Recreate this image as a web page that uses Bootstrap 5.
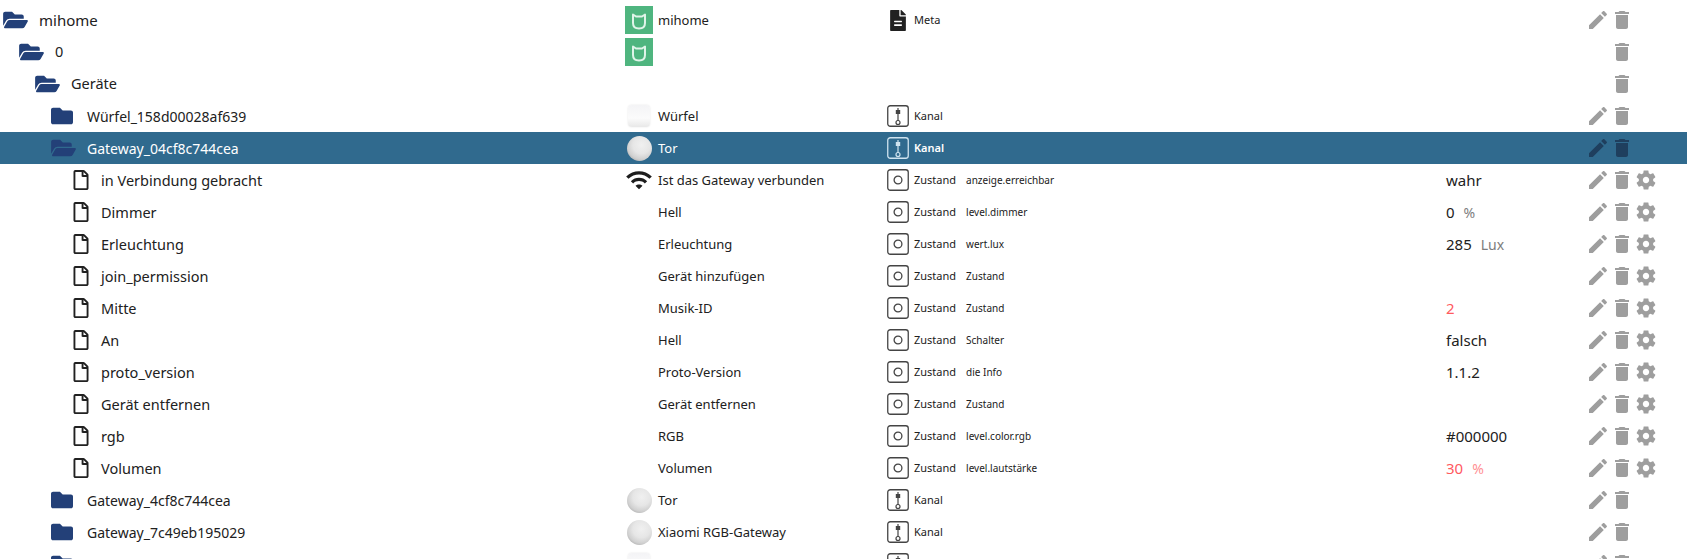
<!DOCTYPE html>
<html lang="de">
<head>
<meta charset="utf-8">
<title>mihome</title>
<link rel="stylesheet" href="https://cdn.jsdelivr.net/npm/bootstrap@5.3.0/dist/css/bootstrap.min.css">
<style>
html,body{height:559px;overflow:hidden;background:#fff}
body{font-family:"Noto Sans","Liberation Sans",sans-serif;color:#212121;font-size:14px}
.tree{padding-top:4px}
.trow{height:32px;white-space:nowrap}
.trow.sel{background:#306a8e;color:#fff}
.cname{width:625px;font-size:14.5px}
.cname.l0{font-size:15px}
.cname.l3{font-size:14px}
.cname.l4 span:last-child,.cdev span:last-child{padding-top:2px}
.cdev .devslot:last-child{padding-top:0}
.cdev{width:262px;font-size:13px}
.ctype{width:559px;font-size:11px}
.cval{width:140px;font-size:15px;padding-top:1px}
.cact{color:#9e9e9e}
.sel .cact{color:#1f3f5e}
.l0{padding-left:3px}.l1{padding-left:19px}.l2{padding-left:35px}.l3{padding-left:51px}.l4{padding-left:73px}
.ico{width:36px;flex:none}
.l4 .ico{width:28px}
.fold{width:25px;height:22px;color:#234078;fill:currentColor;display:block}
.foldc{width:22px}
.filei{width:16px;height:20px;fill:#212121;display:block}
.devslot{width:28px;height:28px;margin-right:5px;flex:none}
.mi{background:#4fb57f;display:block}
.disc{width:25px;height:25px;border-radius:50%;margin-left:2px;background:radial-gradient(circle at 58% 36%,#f0f0f0 0,#e6e6e6 40%,#d0d0d0 66%,#8a8a8a 100%)}
.cube{width:22px;height:22px;margin:3px 0 0 3px;border-radius:4px;background:linear-gradient(180deg,#f4f4f6,#fbfbfb 60%,#e8e8e8);box-shadow:0 0 2px #e2e2e2}
.wifi{display:block;width:28px;height:28px;fill:#1d1d1d}
.typ{width:22px;height:22px;margin-right:5px;flex:none;color:#444;display:block}
.sel .typ{color:#cfe3ef}
.sel .tlabel{font-weight:600}
.metai{width:16px;height:21px;margin:0 8px 0 3px;flex:none;fill:#212121;display:block}
.role{margin-left:10px;font-size:10px}
.act{width:24px;height:24px;fill:currentColor;display:block;flex:none}
.bad{color:#ff5a5f}
.unit{margin-left:9px;color:#7d7d7d;font-size:14px}
.bad .unit{color:#ff8f93}
</style>
</head>
<body>
<svg width="0" height="0" class="position-absolute">
  <symbol id="fo" viewBox="0 0 576 512"><path d="M572.694 292.093L500.27 416.248A63.997 63.997 0 0 1 444.989 448H45.025c-18.523 0-30.064-20.093-20.731-36.093l72.424-124.155A64 64 0 0 1 152 256h399.964c18.523 0 30.064 20.093 20.73 36.093zM152 224h328v-48c0-26.51-21.49-48-48-48H272l-64-64H48C21.49 64 0 85.49 0 112v278.046l69.077-118.418C86.214 242.25 117.989 224 152 224z"/></symbol>
  <symbol id="fc" viewBox="0 0 512 512"><path d="M464 128H272l-64-64H48C21.49 64 0 85.49 0 112v288c0 26.51 21.49 48 48 48h416c26.51 0 48-21.49 48-48V176c0-26.51-21.49-48-48-48z"/></symbol>
  <symbol id="fi" viewBox="0 0 384 512"><path d="M369.9 97.9L286 14C277 5 264.8-.1 252.1-.1H48C21.5 0 0 21.5 0 48v416c0 26.5 21.5 48 48 48h288c26.5 0 48-21.5 48-48V131.9c0-12.7-5.1-25-14.1-34zM332.1 128H256V51.9l76.1 76.1zM48 464V48h160v104c0 13.3 10.7 24 24 24h104v288H48z"/></symbol>
  <symbol id="me" viewBox="0 0 384 512"><path d="M224 136V0H24C10.7 0 0 10.7 0 24v464c0 13.3 10.7 24 24 24h336c13.3 0 24-10.7 24-24V160H248c-13.2 0-24-10.8-24-24zm64 240c0 6.6-5.4 12-12 12H108c-6.6 0-12-5.4-12-12v-16c0-6.6 5.4-12 12-12h168c6.6 0 12 5.4 12 12v16zm0-88c0 6.6-5.4 12-12 12H108c-6.6 0-12-5.4-12-12v-16c0-6.6 5.4-12 12-12h168c6.6 0 12 5.4 12 12v16zm96-166.1v6.1H256V0h6.1c6.4 0 12.5 2.5 17 7l97.9 98c4.5 4.5 7 10.6 7 16.9z"/></symbol>
  <symbol id="pe" viewBox="0 0 24 24"><path d="M3 17.25V21h3.75L17.81 9.94l-3.75-3.75L3 17.25zM20.71 7.04c.39-.39.39-1.02 0-1.41l-2.34-2.34c-.39-.39-1.02-.39-1.41 0l-1.83 1.83 3.75 3.75 1.83-1.83z"/></symbol>
  <symbol id="tr" viewBox="0 0 24 24"><path d="M6 19c0 1.1.9 2 2 2h8c1.1 0 2-.9 2-2V7H6v12zM19 4h-3.5l-1-1h-5l-1 1H5v2h14V4z"/></symbol>
  <symbol id="ge" viewBox="0 0 24 24"><path d="M19.14 12.94c.04-.3.06-.61.06-.94 0-.32-.02-.64-.07-.94l2.03-1.58c.18-.14.23-.41.12-.61l-1.92-3.32c-.12-.22-.37-.29-.59-.22l-2.39.96c-.5-.38-1.03-.7-1.62-.94l-.36-2.54c-.04-.24-.24-.41-.48-.41h-3.84c-.24 0-.43.17-.47.41l-.36 2.54c-.59.24-1.13.57-1.62.94l-2.39-.96c-.22-.08-.47 0-.59.22L2.74 8.87c-.12.21-.08.47.12.61l2.03 1.58c-.05.3-.09.63-.09.94s.02.64.07.94l-2.03 1.58c-.18.14-.23.41-.12.61l1.92 3.32c.12.22.37.29.59.22l2.39-.96c.5.38 1.03.7 1.62.94l.36 2.54c.05.24.24.41.48.41h3.84c.24 0 .44-.17.47-.41l.36-2.54c.59-.24 1.13-.56 1.62-.94l2.39.96c.22.08.47 0 .59-.22l1.92-3.32c.12-.22.07-.47-.12-.61l-2.01-1.58zM12 15.2c-1.77 0-3.2-1.43-3.2-3.2s1.43-3.2 3.2-3.2 3.2 1.43 3.2 3.2-1.43 3.2-3.2 3.2z" fill-rule="evenodd"/></symbol>
  <symbol id="wi" viewBox="0 0 24 24"><path d="M1 9l2 2c4.97-4.97 13.03-4.97 18 0l2-2C16.93 2.93 7.08 2.93 1 9zm8 8l3 3 3-3c-1.65-1.66-4.34-1.66-6 0zm-4-4l2 2c2.76-2.76 7.24-2.76 10 0l2-2C15.14 9.14 8.87 9.14 5 13z"/></symbol>
  <symbol id="ml" viewBox="0 0 28 28"><path d="M8 8.500l3 2h6l3-2v8.500c0 3.800-2.600 5.500-6 5.500s-6-1.700-6-5.500z" fill="none" stroke="#e0f4e9" stroke-width="2" stroke-linejoin="round"/></symbol>
  <symbol id="st" viewBox="0 0 22 22"><rect x=".75" y=".75" width="20.500" height="20.500" rx="2.500" fill="none" stroke="currentColor" stroke-width="1.300"/><circle cx="11" cy="11" r="3.900" fill="none" stroke="currentColor" stroke-width="1.300"/></symbol>
  <symbol id="ch" viewBox="0 0 22 22"><rect x=".75" y=".75" width="20.500" height="20.500" rx="2.500" fill="none" stroke="currentColor" stroke-width="1.300"/><path d="M11 3v13" stroke="currentColor" stroke-width="1.200"/><rect x="8.800" y="5" width="4.400" height="4" fill="currentColor"/><circle cx="11" cy="17.500" r="2" fill="none" stroke="currentColor" stroke-width="1.200"/></symbol>
</svg>

<main class="tree">
  <div class="trow d-flex align-items-center">
    <div class="cname l0 d-flex align-items-center"><span class="ico"><svg class="fold"><use href="#fo"/></svg></span><span>mihome</span></div>
    <div class="cdev d-flex align-items-center"><svg class="devslot mi"><use href="#ml"/></svg><span>mihome</span></div>
    <div class="ctype d-flex align-items-center"><svg class="metai"><use href="#me"/></svg><span class="tlabel">Meta</span></div>
    <div class="cval"></div>
    <div class="cact d-flex"><svg class="act"><use href="#pe"/></svg><svg class="act"><use href="#tr"/></svg></div>
  </div>
  <div class="trow d-flex align-items-center">
    <div class="cname l1 d-flex align-items-center"><span class="ico"><svg class="fold"><use href="#fo"/></svg></span><span>0</span></div>
    <div class="cdev d-flex align-items-center"><svg class="devslot mi"><use href="#ml"/></svg></div>
    <div class="ctype"></div>
    <div class="cval"></div>
    <div class="cact d-flex"><span class="act"></span><svg class="act"><use href="#tr"/></svg></div>
  </div>
  <div class="trow d-flex align-items-center">
    <div class="cname l2 d-flex align-items-center"><span class="ico"><svg class="fold"><use href="#fo"/></svg></span><span>Geräte</span></div>
    <div class="cdev"></div>
    <div class="ctype"></div>
    <div class="cval"></div>
    <div class="cact d-flex"><span class="act"></span><svg class="act"><use href="#tr"/></svg></div>
  </div>
  <div class="trow d-flex align-items-center">
    <div class="cname l3 d-flex align-items-center"><span class="ico"><svg class="fold foldc"><use href="#fc"/></svg></span><span>Würfel_158d00028af639</span></div>
    <div class="cdev d-flex align-items-center"><span class="devslot"><span class="cube d-block"></span></span><span>Würfel</span></div>
    <div class="ctype d-flex align-items-center"><svg class="typ"><use href="#ch"/></svg><span class="tlabel">Kanal</span></div>
    <div class="cval"></div>
    <div class="cact d-flex"><svg class="act"><use href="#pe"/></svg><svg class="act"><use href="#tr"/></svg></div>
  </div>
  <div class="trow sel d-flex align-items-center">
    <div class="cname l3 d-flex align-items-center"><span class="ico"><svg class="fold"><use href="#fo"/></svg></span><span>Gateway_04cf8c744cea</span></div>
    <div class="cdev d-flex align-items-center"><span class="devslot d-flex align-items-center"><span class="disc d-block"></span></span><span>Tor</span></div>
    <div class="ctype d-flex align-items-center"><svg class="typ"><use href="#ch"/></svg><span class="tlabel">Kanal</span></div>
    <div class="cval"></div>
    <div class="cact d-flex"><svg class="act"><use href="#pe"/></svg><svg class="act"><use href="#tr"/></svg></div>
  </div>
  <div class="trow d-flex align-items-center">
    <div class="cname l4 d-flex align-items-center"><span class="ico"><svg class="filei"><use href="#fi"/></svg></span><span>in Verbindung gebracht</span></div>
    <div class="cdev d-flex align-items-center"><span class="devslot"><svg class="wifi"><use href="#wi"/></svg></span><span>Ist das Gateway verbunden</span></div>
    <div class="ctype d-flex align-items-center"><svg class="typ"><use href="#st"/></svg><span class="tlabel">Zustand</span><span class="role">anzeige.erreichbar</span></div>
    <div class="cval">wahr</div>
    <div class="cact d-flex"><svg class="act"><use href="#pe"/></svg><svg class="act"><use href="#tr"/></svg><svg class="act"><use href="#ge"/></svg></div>
  </div>
  <div class="trow d-flex align-items-center">
    <div class="cname l4 d-flex align-items-center"><span class="ico"><svg class="filei"><use href="#fi"/></svg></span><span>Dimmer</span></div>
    <div class="cdev d-flex align-items-center"><span class="devslot"></span><span>Hell</span></div>
    <div class="ctype d-flex align-items-center"><svg class="typ"><use href="#st"/></svg><span class="tlabel">Zustand</span><span class="role">level.dimmer</span></div>
    <div class="cval">0<span class="unit">%</span></div>
    <div class="cact d-flex"><svg class="act"><use href="#pe"/></svg><svg class="act"><use href="#tr"/></svg><svg class="act"><use href="#ge"/></svg></div>
  </div>
  <div class="trow d-flex align-items-center">
    <div class="cname l4 d-flex align-items-center"><span class="ico"><svg class="filei"><use href="#fi"/></svg></span><span>Erleuchtung</span></div>
    <div class="cdev d-flex align-items-center"><span class="devslot"></span><span>Erleuchtung</span></div>
    <div class="ctype d-flex align-items-center"><svg class="typ"><use href="#st"/></svg><span class="tlabel">Zustand</span><span class="role">wert.lux</span></div>
    <div class="cval">285<span class="unit">Lux</span></div>
    <div class="cact d-flex"><svg class="act"><use href="#pe"/></svg><svg class="act"><use href="#tr"/></svg><svg class="act"><use href="#ge"/></svg></div>
  </div>
  <div class="trow d-flex align-items-center">
    <div class="cname l4 d-flex align-items-center"><span class="ico"><svg class="filei"><use href="#fi"/></svg></span><span>join_permission</span></div>
    <div class="cdev d-flex align-items-center"><span class="devslot"></span><span>Gerät hinzufügen</span></div>
    <div class="ctype d-flex align-items-center"><svg class="typ"><use href="#st"/></svg><span class="tlabel">Zustand</span><span class="role">Zustand</span></div>
    <div class="cval"></div>
    <div class="cact d-flex"><svg class="act"><use href="#pe"/></svg><svg class="act"><use href="#tr"/></svg><svg class="act"><use href="#ge"/></svg></div>
  </div>
  <div class="trow d-flex align-items-center">
    <div class="cname l4 d-flex align-items-center"><span class="ico"><svg class="filei"><use href="#fi"/></svg></span><span>Mitte</span></div>
    <div class="cdev d-flex align-items-center"><span class="devslot"></span><span>Musik-ID</span></div>
    <div class="ctype d-flex align-items-center"><svg class="typ"><use href="#st"/></svg><span class="tlabel">Zustand</span><span class="role">Zustand</span></div>
    <div class="cval bad">2</div>
    <div class="cact d-flex"><svg class="act"><use href="#pe"/></svg><svg class="act"><use href="#tr"/></svg><svg class="act"><use href="#ge"/></svg></div>
  </div>
  <div class="trow d-flex align-items-center">
    <div class="cname l4 d-flex align-items-center"><span class="ico"><svg class="filei"><use href="#fi"/></svg></span><span>An</span></div>
    <div class="cdev d-flex align-items-center"><span class="devslot"></span><span>Hell</span></div>
    <div class="ctype d-flex align-items-center"><svg class="typ"><use href="#st"/></svg><span class="tlabel">Zustand</span><span class="role">Schalter</span></div>
    <div class="cval">falsch</div>
    <div class="cact d-flex"><svg class="act"><use href="#pe"/></svg><svg class="act"><use href="#tr"/></svg><svg class="act"><use href="#ge"/></svg></div>
  </div>
  <div class="trow d-flex align-items-center">
    <div class="cname l4 d-flex align-items-center"><span class="ico"><svg class="filei"><use href="#fi"/></svg></span><span>proto_version</span></div>
    <div class="cdev d-flex align-items-center"><span class="devslot"></span><span>Proto-Version</span></div>
    <div class="ctype d-flex align-items-center"><svg class="typ"><use href="#st"/></svg><span class="tlabel">Zustand</span><span class="role">die Info</span></div>
    <div class="cval">1.1.2</div>
    <div class="cact d-flex"><svg class="act"><use href="#pe"/></svg><svg class="act"><use href="#tr"/></svg><svg class="act"><use href="#ge"/></svg></div>
  </div>
  <div class="trow d-flex align-items-center">
    <div class="cname l4 d-flex align-items-center"><span class="ico"><svg class="filei"><use href="#fi"/></svg></span><span>Gerät entfernen</span></div>
    <div class="cdev d-flex align-items-center"><span class="devslot"></span><span>Gerät entfernen</span></div>
    <div class="ctype d-flex align-items-center"><svg class="typ"><use href="#st"/></svg><span class="tlabel">Zustand</span><span class="role">Zustand</span></div>
    <div class="cval"></div>
    <div class="cact d-flex"><svg class="act"><use href="#pe"/></svg><svg class="act"><use href="#tr"/></svg><svg class="act"><use href="#ge"/></svg></div>
  </div>
  <div class="trow d-flex align-items-center">
    <div class="cname l4 d-flex align-items-center"><span class="ico"><svg class="filei"><use href="#fi"/></svg></span><span>rgb</span></div>
    <div class="cdev d-flex align-items-center"><span class="devslot"></span><span>RGB</span></div>
    <div class="ctype d-flex align-items-center"><svg class="typ"><use href="#st"/></svg><span class="tlabel">Zustand</span><span class="role">level.color.rgb</span></div>
    <div class="cval">#000000</div>
    <div class="cact d-flex"><svg class="act"><use href="#pe"/></svg><svg class="act"><use href="#tr"/></svg><svg class="act"><use href="#ge"/></svg></div>
  </div>
  <div class="trow d-flex align-items-center">
    <div class="cname l4 d-flex align-items-center"><span class="ico"><svg class="filei"><use href="#fi"/></svg></span><span>Volumen</span></div>
    <div class="cdev d-flex align-items-center"><span class="devslot"></span><span>Volumen</span></div>
    <div class="ctype d-flex align-items-center"><svg class="typ"><use href="#st"/></svg><span class="tlabel">Zustand</span><span class="role">level.lautstärke</span></div>
    <div class="cval bad">30<span class="unit">%</span></div>
    <div class="cact d-flex"><svg class="act"><use href="#pe"/></svg><svg class="act"><use href="#tr"/></svg><svg class="act"><use href="#ge"/></svg></div>
  </div>
  <div class="trow d-flex align-items-center">
    <div class="cname l3 d-flex align-items-center"><span class="ico"><svg class="fold foldc"><use href="#fc"/></svg></span><span>Gateway_4cf8c744cea</span></div>
    <div class="cdev d-flex align-items-center"><span class="devslot d-flex align-items-center"><span class="disc d-block"></span></span><span>Tor</span></div>
    <div class="ctype d-flex align-items-center"><svg class="typ"><use href="#ch"/></svg><span class="tlabel">Kanal</span></div>
    <div class="cval"></div>
    <div class="cact d-flex"><svg class="act"><use href="#pe"/></svg><svg class="act"><use href="#tr"/></svg></div>
  </div>
  <div class="trow d-flex align-items-center">
    <div class="cname l3 d-flex align-items-center"><span class="ico"><svg class="fold foldc"><use href="#fc"/></svg></span><span>Gateway_7c49eb195029</span></div>
    <div class="cdev d-flex align-items-center"><span class="devslot d-flex align-items-center"><span class="disc d-block"></span></span><span>Xiaomi RGB-Gateway</span></div>
    <div class="ctype d-flex align-items-center"><svg class="typ"><use href="#ch"/></svg><span class="tlabel">Kanal</span></div>
    <div class="cval"></div>
    <div class="cact d-flex"><svg class="act"><use href="#pe"/></svg><svg class="act"><use href="#tr"/></svg></div>
  </div>
  <div class="trow d-flex align-items-center">
    <div class="cname l3 d-flex align-items-center"><span class="ico"><svg class="fold foldc"><use href="#fc"/></svg></span><span>Bewegung_158d0001dfa</span></div>
    <div class="cdev d-flex align-items-center"><span class="devslot"><span class="cube d-block"></span></span></div>
    <div class="ctype d-flex align-items-center"><svg class="typ"><use href="#ch"/></svg></div>
    <div class="cval"></div>
    <div class="cact d-flex"><svg class="act"><use href="#pe"/></svg><svg class="act"><use href="#tr"/></svg></div>
  </div>
</main>
</body>
</html>
